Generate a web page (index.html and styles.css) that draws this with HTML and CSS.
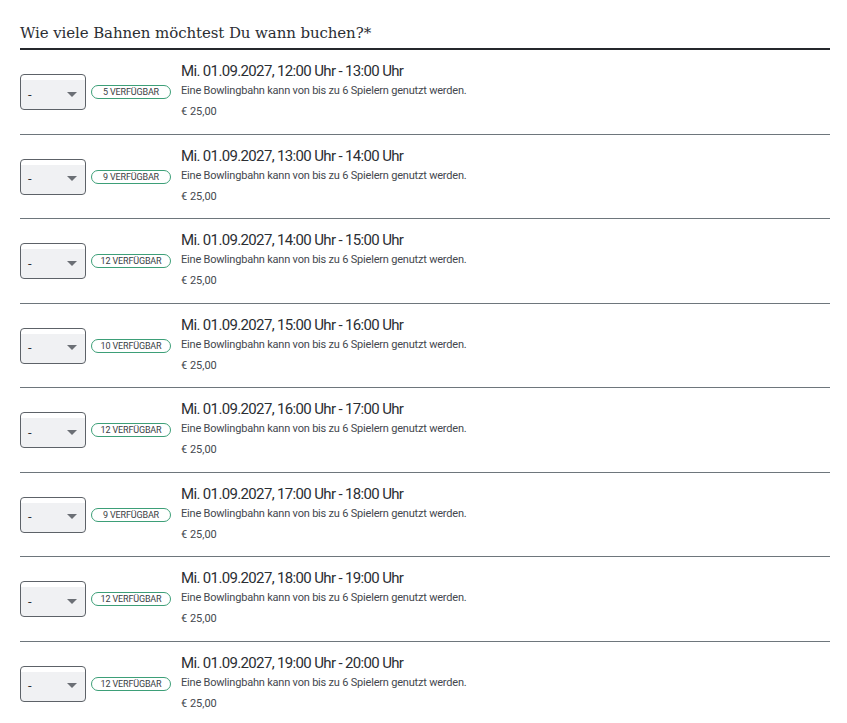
FILE: index.html
```html
<!DOCTYPE html>
<html lang="de">

<head>
    <meta charset="utf-8">
    <meta name="viewport" content="width=device-width, initial-scale=1.0">
    <title>Bahnen buchen</title>
    <link rel="stylesheet" href="styles.css">
</head>

<body>

    <div class="buchung">
        <h3 class="titel">Wie viele Bahnen möchtest Du wann buchen?*</h3>

        <div class="slot">
            <div class="auswahl"><span>-</span><i class="pfeil"></i></div>
            <div class="platz"><span class="frei">5 Verfügbar</span></div>
            <div class="info">
                <p class="zeit">Mi. 01.09.2027, 12:00 Uhr - 13:00 Uhr</p>
                <p class="text">Eine Bowlingbahn kann von bis zu 6 Spielern genutzt werden.</p>
                <p class="preis">€ 25,00</p>
            </div>
        </div>

        <div class="slot">
            <div class="auswahl"><span>-</span><i class="pfeil"></i></div>
            <div class="platz"><span class="frei">9 Verfügbar</span></div>
            <div class="info">
                <p class="zeit">Mi. 01.09.2027, 13:00 Uhr - 14:00 Uhr</p>
                <p class="text">Eine Bowlingbahn kann von bis zu 6 Spielern genutzt werden.</p>
                <p class="preis">€ 25,00</p>
            </div>
        </div>

        <div class="slot">
            <div class="auswahl"><span>-</span><i class="pfeil"></i></div>
            <div class="platz"><span class="frei">12 Verfügbar</span></div>
            <div class="info">
                <p class="zeit">Mi. 01.09.2027, 14:00 Uhr - 15:00 Uhr</p>
                <p class="text">Eine Bowlingbahn kann von bis zu 6 Spielern genutzt werden.</p>
                <p class="preis">€ 25,00</p>
            </div>
        </div>

        <div class="slot">
            <div class="auswahl"><span>-</span><i class="pfeil"></i></div>
            <div class="platz"><span class="frei">10 Verfügbar</span></div>
            <div class="info">
                <p class="zeit">Mi. 01.09.2027, 15:00 Uhr - 16:00 Uhr</p>
                <p class="text">Eine Bowlingbahn kann von bis zu 6 Spielern genutzt werden.</p>
                <p class="preis">€ 25,00</p>
            </div>
        </div>

        <div class="slot">
            <div class="auswahl"><span>-</span><i class="pfeil"></i></div>
            <div class="platz"><span class="frei">12 Verfügbar</span></div>
            <div class="info">
                <p class="zeit">Mi. 01.09.2027, 16:00 Uhr - 17:00 Uhr</p>
                <p class="text">Eine Bowlingbahn kann von bis zu 6 Spielern genutzt werden.</p>
                <p class="preis">€ 25,00</p>
            </div>
        </div>

        <div class="slot">
            <div class="auswahl"><span>-</span><i class="pfeil"></i></div>
            <div class="platz"><span class="frei">9 Verfügbar</span></div>
            <div class="info">
                <p class="zeit">Mi. 01.09.2027, 17:00 Uhr - 18:00 Uhr</p>
                <p class="text">Eine Bowlingbahn kann von bis zu 6 Spielern genutzt werden.</p>
                <p class="preis">€ 25,00</p>
            </div>
        </div>

        <div class="slot">
            <div class="auswahl"><span>-</span><i class="pfeil"></i></div>
            <div class="platz"><span class="frei">12 Verfügbar</span></div>
            <div class="info">
                <p class="zeit">Mi. 01.09.2027, 18:00 Uhr - 19:00 Uhr</p>
                <p class="text">Eine Bowlingbahn kann von bis zu 6 Spielern genutzt werden.</p>
                <p class="preis">€ 25,00</p>
            </div>
        </div>

        <div class="slot">
            <div class="auswahl"><span>-</span><i class="pfeil"></i></div>
            <div class="platz"><span class="frei">12 Verfügbar</span></div>
            <div class="info">
                <p class="zeit">Mi. 01.09.2027, 19:00 Uhr - 20:00 Uhr</p>
                <p class="text">Eine Bowlingbahn kann von bis zu 6 Spielern genutzt werden.</p>
                <p class="preis">€ 25,00</p>
            </div>
        </div>
    </div>

</body>

</html>
```

FILE: styles.css
```css
body {
    margin: 0;
    font-family: Roboto, "Liberation Sans", sans-serif;
    color: #2b2e33;
    background: white;
}

.buchung {
    margin: 0 17px 0 20px;
}

.titel {
    margin: 0;
    padding: 24px 0 6px;
    font-family: "DejaVu Serif", "Liberation Serif", serif;
    font-weight: normal;
    font-size: 15px;
    line-height: 18px;
    letter-spacing: -0.1px;
    border-bottom: 2px solid #25282c;
}

.slot {
    display: flex;
    align-items: center;
    padding: 11px 0 10.5px;
    border-bottom: 1px solid #6e767c;
}

.slot:last-child {
    border-bottom: none;
}

/* nachgebautes select-feld */
.auswahl {
    box-sizing: border-box;
    width: 66px;
    height: 36px;
    display: flex;
    align-items: center;
    justify-content: space-between;
    padding: 4px 8px 0 7px;
    border: 1px solid #5d6268;
    border-radius: 4px;
    background: linear-gradient(#ffffff 0, #ffffff 5px, #f0f1f3 5px);
    font-size: 13px;
}

.pfeil {
    width: 0;
    height: 0;
    border-left: 5px solid transparent;
    border-right: 5px solid transparent;
    border-top: 5px solid #6b6f75;
}

.platz {
    width: 80px;
    margin-left: 5px;
    display: flex;
}

.frei {
    box-sizing: border-box;
    width: 100%;
    height: 14px;
    line-height: 12px;
    text-align: center;
    border: 1px solid #3d9f78;
    border-radius: 8px;
    font-size: 9px;
    text-transform: uppercase;
    letter-spacing: -0.15px;
    color: #3a3e44;
}

.info {
    margin-left: 10px;
}

.info p {
    margin: 0;
}

.zeit {
    font-size: 15px;
    line-height: 20px;
    letter-spacing: -0.65px;
}

.text {
    font-size: 11px;
    line-height: 20px;
    letter-spacing: -0.2px;
    color: #44484e;
}

.preis {
    font-size: 11px;
    line-height: 22px;
    color: #44484e;
}
```
